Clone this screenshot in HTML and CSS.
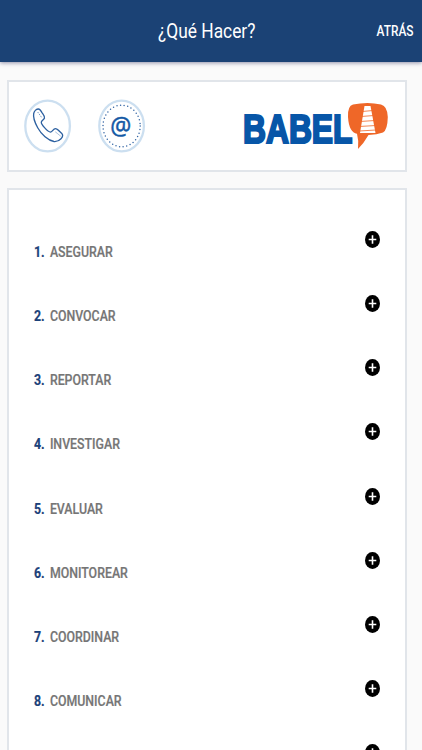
FILE: index.html
```html
<!DOCTYPE html>
<html lang="es">
  <head>
    <meta charset="UTF-8" />
    <meta name="viewport" content="width=device-width, initial-scale=1.0">
    <title>¿Qué Hacer?</title>
    <link rel="stylesheet" href="styles.css">
  </head>
  <body>
    <header class="top-bar">
      <h1 class="top-title">¿Qué Hacer?</h1>
      <a class="back-link">ATRÁS</a>
    </header>

    <main class="content">
      <section class="card contact-card">
        <div class="contact-actions">
          <!-- Teléfono -->
          <svg class="contact-icon" viewBox="0 0 48 54">
            <ellipse class="ring" cx="23.6" cy="27" rx="22.3" ry="25.4"/>
            <path class="phone" d="M9.700 14.500C10.200 12 12.500 10 14.500 10C15.800 10 16.800 11.500 18 13.600C19.400 15.600 21 17.300 20.500 19C20.100 20.700 17.600 21.500 17.300 23.200C17.200 25.400 23.600 33 26.500 33.100C28.200 33 29.200 29.700 31.500 29.700C33.300 29.700 35.800 32.800 37.600 34.300C38.900 35.600 38.700 38 37 39.800C35.400 41.600 33 42.700 30 42.500C24 41.700 17.500 35.500 13.700 28.700C11.200 24.200 8.900 18.600 9.700 14.500Z"/>
            <path class="phone-detail" d="M13.700 13L18 19M31.500 33L36.500 37"/>
          </svg>
          <!-- Correo -->
          <svg class="contact-icon" viewBox="0 0 48 54">
            <ellipse class="ring" cx="23.6" cy="27" rx="22.3" ry="25.4"/>
            <ellipse class="dots" cx="23.6" cy="27" rx="18.6" ry="20.8"/>
            <text class="at-sign" x="12.3" y="35.5" textLength="21" lengthAdjust="spacingAndGlyphs">@</text>
          </svg>
        </div>

        <svg class="logo" width="148" height="52" viewBox="0 0 148 52">
          <text class="logo-text" x="2" y="42.8" textLength="109.5" lengthAdjust="spacingAndGlyphs">BABEL</text>
          <path class="bubble-gap" d="M105.500 17Q105 4 112 3.200Q126 1 140 3.800Q147.500 5 147.800 17Q147.500 32 143 33.500Q135 36 128 36Q123 43 116.500 49Q117 41 115.500 34.500Q106.500 34 105.500 17Z"/>
          <path class="bubble" d="M107 17Q106.500 6 112 4.600Q126 1.300 140 4.400Q146.500 6 146.800 17Q146.500 30 142 32.500Q136 34.500 127.500 35Q123 43 117 49Q118 41 116 33.700Q108 32.500 107 17Z"/>
          <path class="tower" d="M123.500 6H129.500L134.500 33H119Z"/>
          <path class="tower-lines" d="M121 11.500L132 10.500M120 16.500L133 15.500M119 21.500L134 20.500M118 26.500L135 25.500M118 31L135 30"/>
        </svg>
      </section>

      <section class="card steps-card">
        <ol class="steps" id="steps"></ol>
      </section>
    </main>

    <script src="script.js"></script>
  </body>
</html>
```
FILE: styles.css
```css
* {
  box-sizing: border-box;
}

body {
  display: flex;
  flex-direction: column;
  margin: 0;
  height: 100vh;
  background: #fafafa;
  font-family: Roboto, sans-serif;
  overflow: hidden;
}

.top-bar {
  position: relative;
  display: grid;
  grid-template-columns: 1fr auto 1fr;
  flex: none;
  align-items: center;
  height: 62px;
  padding: 0 8px 0 0;
  background: #1b4275;
  box-shadow: 0 1px 4px rgba(40, 40, 90, 0.5);
  color: #fff;
}

.top-title {
  grid-column: 2;
  margin: 0;
  padding-top: 2px;
  font-size: 19.5px;
  font-weight: 400;
  line-height: 60px;
  transform: scaleX(0.89);
}

.back-link {
  justify-self: end;
  font-size: 14px;
  font-weight: 500;
  transform: scaleX(0.85);
  transform-origin: right;
}

.content {
  display: flex;
  flex: 1;
  flex-direction: column;
  min-height: 0;
  padding: 18px 15px 0 7px;
}

.card {
  background: #fff;
  border: 2px solid #e1e5ea;
}

.contact-card {
  display: flex;
  flex: none;
  align-items: center;
  justify-content: space-between;
  height: 92px;
  margin-bottom: 16px;
  padding: 0 16px 0 15px;
}

.contact-actions {
  display: flex;
  gap: 26px;
}

.contact-icon {
  width: 48px;
  height: 54px;
}

.ring {
  fill: none;
  stroke: #ccdff0;
  stroke-width: 2.3;
}

.phone {
  fill: none;
  stroke: #2c60a0;
  stroke-width: 1.3;
}

.phone-detail {
  fill: none;
  stroke: #5482b8;
  stroke-width: 0.8;
  stroke-dasharray: 1.5 1;
}

.dots {
  fill: none;
  stroke: #3466a5;
  stroke-width: 1.5;
  stroke-linecap: round;
  stroke-dasharray: 0 3.65;
}

.at-sign {
  fill: #1459a5;
  stroke: #1459a5;
  stroke-width: 0.5;
  font-family: "Open Sans", sans-serif;
  font-size: 26px;
  font-weight: 400;
}

.logo-text {
  fill: #0756a8;
  stroke: #0756a8;
  stroke-width: 2.2;
  font-family: "Liberation Sans", sans-serif;
  font-size: 40px;
  font-weight: 700;
}

.bubble-gap,
.tower {
  fill: #fff;
}

.bubble {
  fill: #ef6728;
}

.tower-lines {
  fill: none;
  stroke: #ef6728;
  stroke-width: 0.8;
}

.steps-card {
  flex: 1;
  min-height: 0;
  padding: 41px 25px 0;
  border-bottom: 0;
  overflow: hidden;
}

.steps {
  margin: 0;
  padding: 0;
  list-style: none;
}

.step {
  display: flex;
  justify-content: space-between;
  height: 64.15px;
}

.step-label {
  margin-top: 11px;
  font-size: 14px;
  font-weight: 500;
  line-height: 20px;
  color: #757575;
  -webkit-text-stroke: 0.2px;
  transform: scaleX(0.882);
  transform-origin: left;
}

.step-number {
  display: inline-block;
  width: 18px;
  font-weight: 700;
  color: #1b4179;
}

.step-icon {
  width: 15px;
  height: 17px;
}
```
FILE: script.js
```
const steps = [
  'ASEGURAR',
  'CONVOCAR',
  'REPORTAR',
  'INVESTIGAR',
  'EVALUAR',
  'MONITOREAR',
  'COORDINAR',
  'COMUNICAR',
  '',
];

const plusIcon = `
  <svg class="step-icon" viewBox="0 0 15 17">
    <ellipse cx="7.5" cy="8.5" rx="7.5" ry="8.5" fill="#000"/>
    <path d="M7.5 4.3V12.7M3.700 8.5H11.300" stroke="#fff" stroke-width="1.6"/>
  </svg>`;

document.getElementById('steps').innerHTML = steps.map((name, i) => `
  <li class="step">
    <span class="step-label">${name ? `<span class="step-number">${i + 1}.</span>${name}` : ''}</span>
    ${plusIcon}
  </li>`).join('');
```
